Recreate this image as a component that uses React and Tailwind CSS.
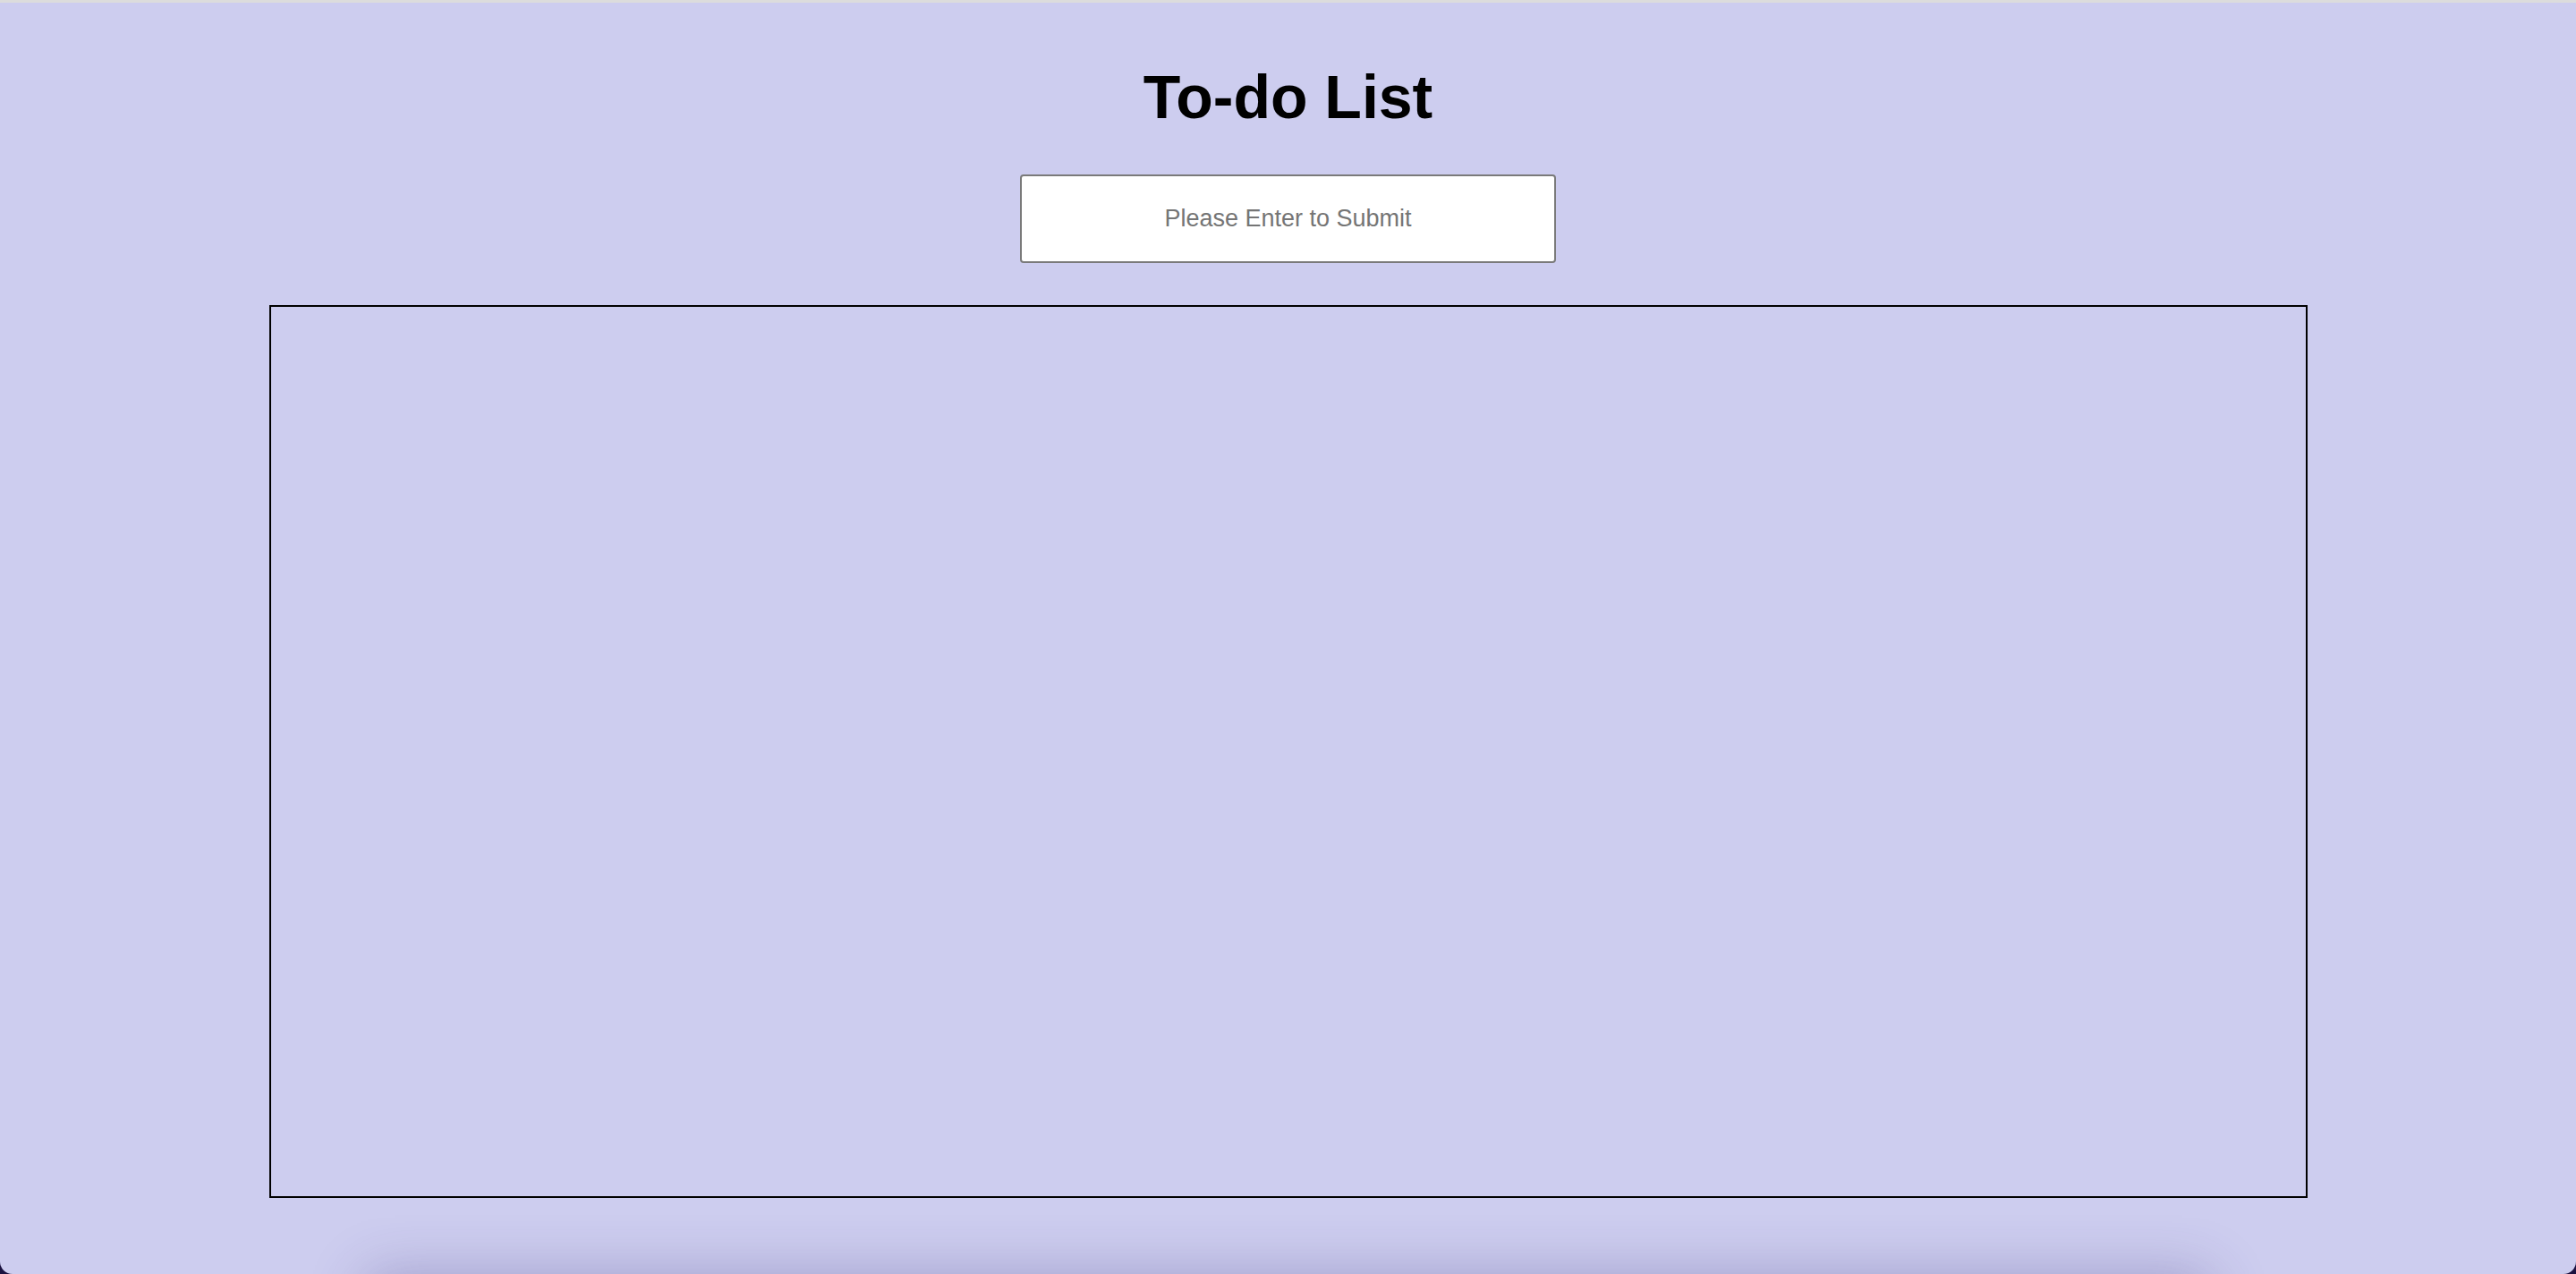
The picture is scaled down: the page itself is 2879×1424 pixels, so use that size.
import { useState } from "react";

export default function App() {
  const [todo, setTodo] = useState("");
  const [items, setItems] = useState([]);

  const handleKey = (e) => {
    if (e.key === "Enter" && todo.trim()) {
      setItems([...items, todo.trim()]);
      setTodo("");
    }
  };

  return (
    <div className="h-screen w-full bg-[#1b1240] overflow-hidden">
      <div
        className="h-full w-full bg-[#cdcdef] border-t-[3px] border-[#dcdcdc] rounded-b-[14px] flex flex-col items-center overflow-hidden"
        style={{ fontFamily: '"Liberation Sans", Arial, sans-serif' }}
      >
        <h1 className="mt-[66px] text-[68px] leading-[78px] font-bold text-black">
          To-do List
        </h1>

        <input
          value={todo}
          onChange={(e) => setTodo(e.target.value)}
          onKeyDown={handleKey}
          placeholder="Please Enter to Submit"
          className="mt-[48px] w-[599px] h-[99px] bg-white border-2 border-[#7a7a7a] rounded-[4px] text-center text-[27px] text-black placeholder:text-[#757575] outline-none"
        />

        <div className="mt-[47px] w-[2278px] h-[998px] shrink-0 border-2 border-black shadow-[0_975px_60px_-110px_rgba(60,50,120,0.32)]">
          <ul className="p-6 space-y-3">
            {items.map((item, i) => (
              <li key={i} className="text-[27px] text-black">
                {item}
              </li>
            ))}
          </ul>
        </div>
      </div>
    </div>
  );
}
